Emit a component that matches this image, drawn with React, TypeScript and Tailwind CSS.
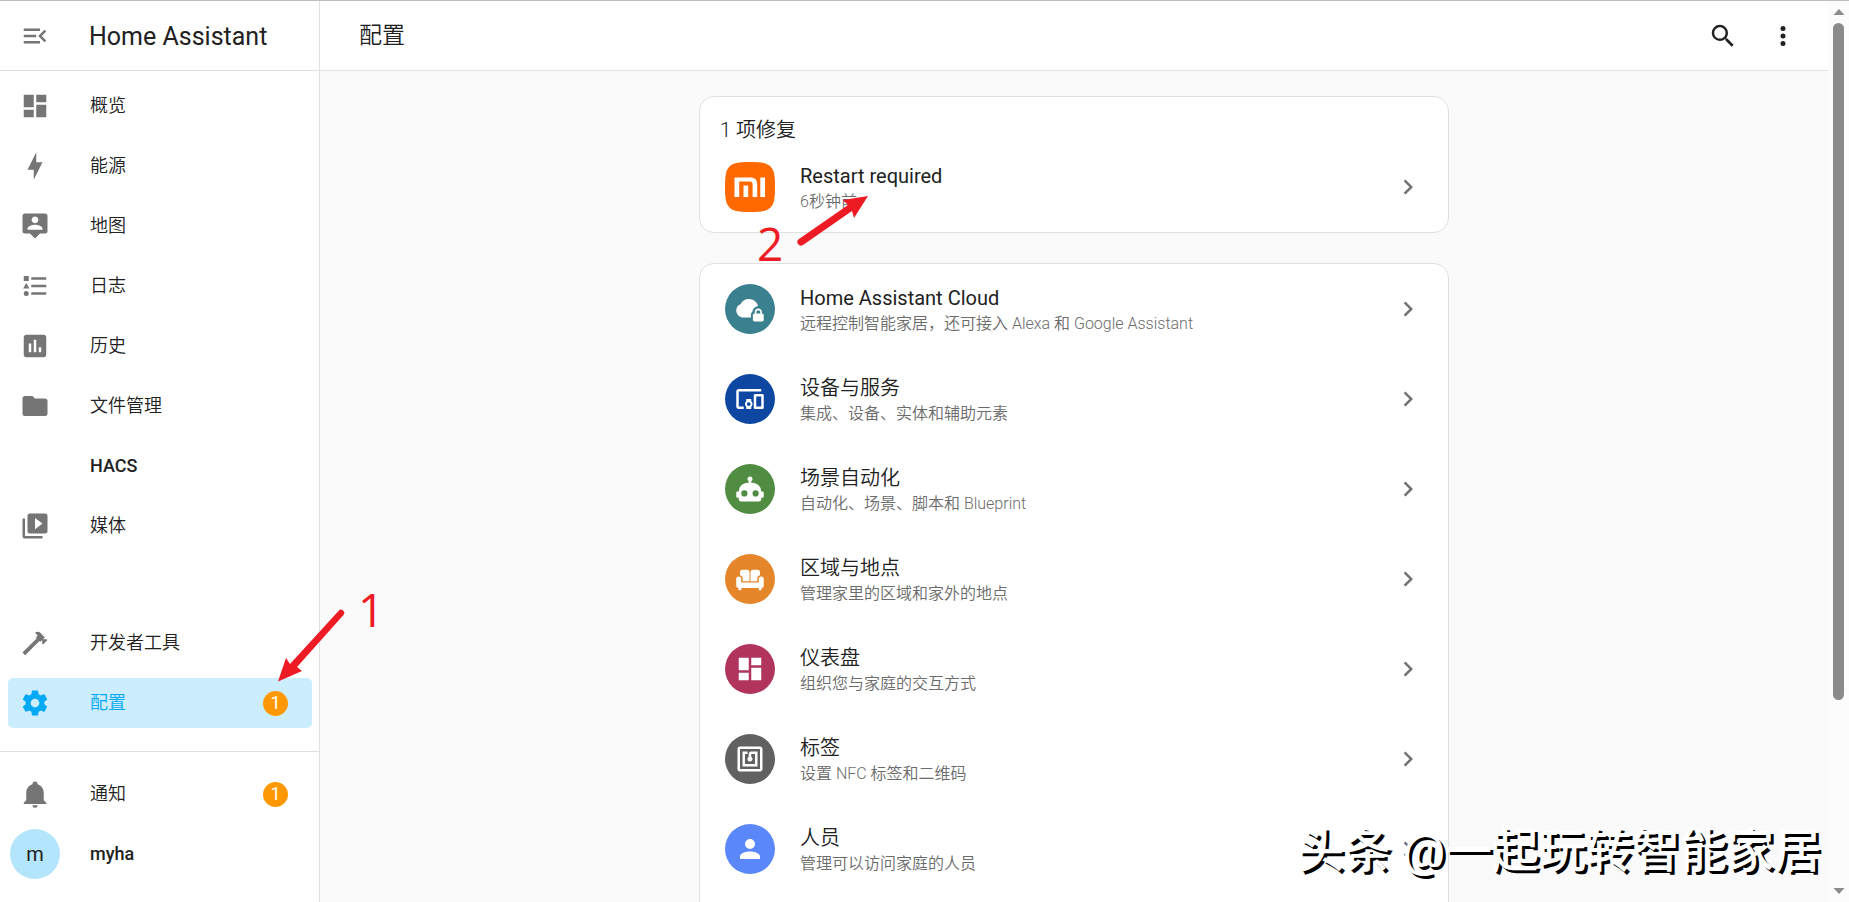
import type { ReactNode } from 'react'

const ICONS = {
  menuOpen: 'M21,15.61L19.59,17L14.58,12L19.59,7L21,8.39L17.44,12L21,15.61M3,6H16V8H3V6M3,13V11H13V13H3M3,18V16H16V18H3Z',
  dashboard: 'M13,3V9H21V3M13,21H21V11H13M3,21H11V15H3M3,13H11V3H3V13Z',
  bolt: 'M11 15H6L13 1V9H18L11 23V15Z',
  map: 'M20,2H4A2,2 0 0,0 2,4V16A2,2 0 0,0 4,18H8L12,22L16,18H20A2,2 0 0,0 22,16V4A2,2 0 0,0 20,2M12,4.3C13.5,4.3 14.7,5.5 14.7,7C14.7,8.5 13.5,9.7 12,9.7C10.5,9.7 9.3,8.5 9.3,7C9.3,5.5 10.5,4.3 12,4.3M18,15H6V14.1C6,12.1 10,11 12,11C14,11 18,12.1 18,14.1V15Z',
  logbook: 'M5,9.5L7.5,14H2.5L5,9.5M3,4H7V8H3V4M5,20A2,2 0 0,0 7,18A2,2 0 0,0 5,16A2,2 0 0,0 3,18A2,2 0 0,0 5,20M9,5V7H21V5H9M9,19H21V17H9V19M9,13H21V11H9V13Z',
  history: 'M9 17H7V10H9V17M13 17H11V7H13V17M17 17H15V13H17V17M19 3H5C3.9 3 3 3.9 3 5V19C3 20.1 3.9 21 5 21H19C20.1 21 21 20.1 21 19V5C21 3.9 20.1 3 19 3Z',
  folder: 'M10,4H4C2.89,4 2,4.89 2,6V18A2,2 0 0,0 4,20H20A2,2 0 0,0 22,18V8C22,6.89 21.1,6 20,6H12L10,4Z',
  media: 'M4,6H2V20A2,2 0 0,0 4,22H18V20H4V6M20,2H8A2,2 0 0,0 6,4V16A2,2 0 0,0 8,18H20A2,2 0 0,0 22,16V4A2,2 0 0,0 20,2M12,14.5V5.5L18,10L12,14.5Z',
  hammer: 'M2,19.63L13.43,8.2L12.72,7.5L14.14,6.07L12,3.89C13.2,2.7 15.09,2.7 16.27,3.89L19.87,7.5L18.45,8.91H21.29L22,9.62L18.45,13.17L17.74,12.46V9.62L16.27,11.04L15.56,10.33L4.13,21.76L2,19.63Z',
  cog: 'M12,15.5A3.5,3.5 0 0,1 8.5,12A3.5,3.5 0 0,1 12,8.5A3.5,3.5 0 0,1 15.5,12A3.5,3.5 0 0,1 12,15.5M19.43,12.97C19.47,12.65 19.5,12.33 19.5,12C19.5,11.67 19.47,11.34 19.43,11L21.54,9.37C21.73,9.22 21.78,8.95 21.66,8.73L19.66,5.27C19.54,5.05 19.27,4.96 19.05,5.05L16.56,6.05C16.04,5.66 15.5,5.32 14.87,5.07L14.5,2.42C14.46,2.18 14.25,2 14,2H10C9.75,2 9.54,2.18 9.5,2.42L9.13,5.07C8.5,5.32 7.96,5.66 7.44,6.05L4.95,5.05C4.73,4.96 4.46,5.05 4.34,5.27L2.34,8.73C2.21,8.95 2.27,9.22 2.46,9.37L4.57,11C4.53,11.34 4.5,11.67 4.5,12C4.5,12.33 4.53,12.65 4.57,12.97L2.46,14.63C2.27,14.78 2.21,15.05 2.34,15.27L4.34,18.73C4.46,18.95 4.73,19.03 4.95,18.95L7.44,17.94C7.96,18.34 8.5,18.68 9.13,18.93L9.5,21.58C9.54,21.82 9.75,22 10,22H14C14.25,22 14.46,21.82 14.5,21.58L14.87,18.93C15.5,18.67 16.04,18.34 16.56,17.94L19.05,18.95C19.27,19.03 19.54,18.95 19.66,18.73L21.66,15.27C21.78,15.05 21.73,14.78 21.54,14.63L19.43,12.97Z',
  bell: 'M21,19V20H3V19L5,17V11C5,7.9 7.03,5.17 10,4.29C10,4.19 10,4.1 10,4A2,2 0 0,1 12,2A2,2 0 0,1 14,4C14,4.1 14,4.19 14,4.29C16.97,5.17 19,7.9 19,11V17L21,19M14,21A2,2 0 0,1 12,23A2,2 0 0,1 10,21',
  magnify: 'M9.5,3A6.5,6.5 0 0,1 16,9.5C16,11.11 15.41,12.59 14.44,13.73L14.71,14H15.5L20.5,19L19,20.5L14,15.5V14.71L13.73,14.44C12.59,15.41 11.11,16 9.5,16A6.5,6.5 0 0,1 3,9.5A6.5,6.5 0 0,1 9.5,3M9.5,5C7,5 5,7 5,9.5C5,12 7,14 9.5,14C12,14 14,12 14,9.5C14,7 12,5 9.5,5Z',
  dots: 'M12,16A2,2 0 0,1 14,18A2,2 0 0,1 12,20A2,2 0 0,1 10,18A2,2 0 0,1 12,16M12,10A2,2 0 0,1 14,12A2,2 0 0,1 12,14A2,2 0 0,1 10,12A2,2 0 0,1 12,10M12,4A2,2 0 0,1 14,6A2,2 0 0,1 12,8A2,2 0 0,1 10,6A2,2 0 0,1 12,4Z',
  chevron: 'M8.59,16.58L13.17,12L8.59,7.41L10,6L16,12L10,18L8.59,16.58Z',
  cloudLock: 'M11,4C8,4 5.6,5.6 4.5,8.1C2.4,8.7 1,10.7 1,13C1,16.2 3.3,18.7 6.3,18.7H12.7V16.7C12.7,15.7 13.1,14.9 13.8,14.3C14.1,11.7 16,9.8 18.4,9.5C17.6,6.2 14.6,4 11,4ZM18.6,11.5C17,11.5 15.8,12.7 15.8,14.3V15.6C15,15.6 14.3,16.2 14.3,17V20.6C14.3,21.4 15,22 15.7,22H21.6C22.4,22 23,21.4 23,20.6V17C23,16.2 22.3,15.6 21.5,15.6V14.3C21.5,12.7 20.2,11.5 18.6,11.5M18.6,12.9C19.5,12.9 20.2,13.5 20.2,14.3V15.6H17.1V14.3C17.1,13.5 17.8,12.9 18.6,12.9Z',
  devices: 'M3 6H21V4H3C1.9 4 1 4.9 1 6V18C1 19.1 1.9 20 3 20H7V18H3V6M13 12H9V13.78C8.39 14.33 8 15.11 8 16C8 16.89 8.39 17.67 9 18.22V20H13V18.22C13.61 17.67 14 16.88 14 16S13.61 14.33 13 13.78V12M11 17.5C10.17 17.5 9.5 16.83 9.5 16S10.17 14.5 11 14.5 12.5 15.17 12.5 16 11.83 17.5 11 17.5M22 8H16C15.5 8 15 8.5 15 9V19C15 19.5 15.5 20 16 20H22C22.5 20 23 19.5 23 19V9C23 8.5 22.5 8 22 8M21 18H17V10H21V18Z',
  robot: 'M12,2A2,2 0 0,1 14,4C14,4.74 13.6,5.39 13,5.73V7H14A7,7 0 0,1 21,14H22A1,1 0 0,1 23,15V18A1,1 0 0,1 22,19H21V20A2,2 0 0,1 19,22H5A2,2 0 0,1 3,20V19H2A1,1 0 0,1 1,18V15A1,1 0 0,1 2,14H3A7,7 0 0,1 10,7H11V5.73C10.4,5.39 10,4.74 10,4A2,2 0 0,1 12,2M7.5,13A2.5,2.5 0 0,0 5,15.5A2.5,2.5 0 0,0 7.5,18A2.5,2.5 0 0,0 10,15.5A2.5,2.5 0 0,0 7.5,13M16.5,13A2.5,2.5 0 0,0 14,15.5A2.5,2.5 0 0,0 16.5,18A2.5,2.5 0 0,0 19,15.5A2.5,2.5 0 0,0 16.5,13Z',
  sofa: 'M6,4.5H9.6A2,2 0 0,1 11.6,6.5V13.8H6.2V12A3,3 0 0,0 4,9V6.5A2,2 0 0,1 6,4.5M14.4,4.5H18A2,2 0 0,1 20,6.5V9A3,3 0 0,0 17.8,12V13.8H12.4V6.5A2,2 0 0,1 14.4,4.5M3,10A2,2 0 0,1 5,12V14.8H19V12A2,2 0 0,1 23,12V17.5A2,2 0 0,1 21.2,19.2V21H19V19.2H5V21H2.8V19.2A2,2 0 0,1 1,17.5V12A2,2 0 0,1 3,10Z',
  nfc: 'M18,6H13A2,2 0 0,0 11,8V10.28C10.41,10.62 10,11.26 10,12A2,2 0 0,0 12,14C13.11,14 14,13.1 14,12C14,11.26 13.6,10.62 13,10.28V8H16V16H8V8H10V6H6V18H18M20,20H4V4H20M20,2H4A2,2 0 0,0 2,4V20A2,2 0 0,0 4,22H20C21.11,22 22,21.1 22,20V4C22,2.89 21.11,2 20,2Z',
  account: 'M12,4A4,4 0 0,1 16,8A4,4 0 0,1 12,12A4,4 0 0,1 8,8A4,4 0 0,1 12,4M12,14C16.42,14 20,15.79 20,18V20H4V18C4,15.79 7.58,14 12,14Z',
}

type IconName = keyof typeof ICONS

const PANELS: { label: string; icon?: IconName }[] = [
  { label: '概览', icon: 'dashboard' },
  { label: '能源', icon: 'bolt' },
  { label: '地图', icon: 'map' },
  { label: '日志', icon: 'logbook' },
  { label: '历史', icon: 'history' },
  { label: '文件管理', icon: 'folder' },
  { label: 'HACS' },
  { label: '媒体', icon: 'media' },
]

const SETTINGS: { title: string; description: string; icon: IconName; color: string }[] = [
  { title: 'Home Assistant Cloud', description: '远程控制智能家居，还可接入 Alexa 和 Google Assistant', icon: 'cloudLock', color: 'bg-[#3b808e]' },
  { title: '设备与服务', description: '集成、设备、实体和辅助元素', icon: 'devices', color: 'bg-[#0d47a1]' },
  { title: '场景自动化', description: '自动化、场景、脚本和 Blueprint', icon: 'robot', color: 'bg-[#518c43]' },
  { title: '区域与地点', description: '管理家里的区域和家外的地点', icon: 'sofa', color: 'bg-[#e48629]' },
  { title: '仪表盘', description: '组织您与家庭的交互方式', icon: 'dashboard', color: 'bg-[#b1345c]' },
  { title: '标签', description: '设置 NFC 标签和二维码', icon: 'nfc', color: 'bg-[#616161]' },
  { title: '人员', description: '管理可以访问家庭的人员', icon: 'account', color: 'bg-[#5a87fa]' },
]

// Latin-only labels need a heavier cut than the Chinese ones
const isLatin = (text: string) => /^[\x20-\x7e]+$/.test(text)

function Icon({ name }: { name: IconName }) {
  return (
    <svg viewBox="0 0 24 24" className="w-[30px] h-[30px] shrink-0" fill="currentColor" fillRule="evenodd" aria-hidden="true">
      <path d={ICONS[name]} />
    </svg>
  )
}

function Badge({ count }: { count: number }) {
  return (
    <span className="flex items-center justify-center w-[25px] h-[25px] rounded-full bg-[#ff9800] text-white text-lg">
      {count}
    </span>
  )
}

function NavItem({ label, icon, badge, active }: { label: string; icon?: IconName; badge?: number; active?: boolean }) {
  return (
    <a
      href="#"
      aria-current={active ? 'page' : undefined}
      className={`flex items-center h-[50px] pl-3 pr-6 rounded-[5px] ${active ? 'bg-[#ccedfd] text-[#03a9f4]' : 'text-[#212121]'}`}
    >
      <span className={`w-[30px] mr-10 ${active ? '' : 'text-[#757575]'}`}>{icon && <Icon name={icon} />}</span>
      <span className={`flex-1 text-lg ${isLatin(label) ? 'font-medium' : 'font-[350]'}`}>{label}</span>
      {badge && <Badge count={badge} />}
    </a>
  )
}

function MiLogo() {
  return (
    <svg viewBox="0 0 50 50" className="w-[50px] h-[50px] shrink-0" role="img" aria-label="Xiaomi">
      <path fill="#ff6900" d="M25 0C37 0 42 1 45.5 4.5S50 13 50 25s-1 17-4.5 20.5S37 50 25 50 8 49 4.5 45.5 0 37 0 25 1 8 4.5 4.5 13 0 25 0Z" />
      <path fill="#fff" d="M9.5 15.5h16c4.2 0 6.7 2.2 6.7 6.4V35h-4.6V22.5c0-2-.9-3-2.8-3H14.2V35H9.5ZM18.5 23.5h4.7V35h-4.7ZM35.3 15.5H40V35h-4.7Z" />
    </svg>
  )
}

function Row({ title, description, children }: { title: string; description: string; children: ReactNode }) {
  return (
    <a href="#" className="flex items-center h-[90px] px-[25px]">
      {children}
      <span className="flex-1 ml-[25px] pt-1">
        <span className={`block text-xl leading-[26px] text-[#212121] ${isLatin(title) ? 'font-normal' : 'font-[350]'}`}>{title}</span>
        <span className="block text-base leading-[26px] font-[350] text-[#6b6b6b]">{description}</span>
      </span>
      <span className="text-[#727272]"><Icon name="chevron" /></span>
    </a>
  )
}

export default function App() {
  return (
    <div className="flex h-screen overflow-hidden border-t border-[#bdbdbd] bg-[#fafafa] font-['Roboto','Noto_Sans_CJK_SC',sans-serif] text-[#212121]">
      {/* Sidebar */}
      <aside className="flex flex-col w-80 shrink-0 bg-white border-r border-[#e0e0e0]">
        <div className="flex items-center h-[70px] shrink-0 pl-5 border-b border-[#e0e0e0]">
          <button type="button" aria-label="Toggle sidebar" className="mr-[39px] text-[#757575]"><Icon name="menuOpen" /></button>
          <span className="pt-0.5 text-[25px]">Home Assistant</span>
        </div>
        <nav className="flex flex-col flex-1 gap-2.5 pl-2 pt-2.5 pr-[7px]">
          {PANELS.map(p => <NavItem key={p.label} {...p} />)}
          <div className="flex-1" />
          <NavItem label="开发者工具" icon="hammer" />
          <NavItem label="配置" icon="cog" badge={1} active />
        </nav>
        <div className="mt-[23px] pt-[17px] pb-[23px] pl-2 pr-[7px] border-t border-[#e0e0e0]">
          <NavItem label="通知" icon="bell" badge={1} />
          <a href="#" className="flex items-center h-[50px] mt-2.5 pl-0.5">
            <span className="flex items-center justify-center w-[50px] h-[50px] mr-[30px] rounded-full bg-[#b3e5fc] text-xl">m</span>
            <span className="text-lg font-medium">myha</span>
          </a>
        </div>
      </aside>

      {/* Main panel */}
      <div className="flex flex-col flex-1 min-w-0">
        <header className="flex items-center h-[70px] shrink-0 pl-[39px] pr-[30px] bg-white border-b border-[#e0e0e0]">
          <h1 className="flex-1 pt-0.5 text-[23px] font-[350]">配置</h1>
          <button type="button" aria-label="搜索" className="mr-[30px]"><Icon name="magnify" /></button>
          <button type="button" aria-label="更多"><Icon name="dots" /></button>
        </header>
        <main className="flex-1 min-h-0 overflow-hidden pt-[25px]">
          <section className="max-w-[750px] mx-auto bg-white border border-[#e0e0e0] rounded-[15px]">
            <h2 className="pt-[21px] pl-5 text-xl leading-6 font-[350]">1 项修复</h2>
            <Row title="Restart required" description="6秒钟前"><MiLogo /></Row>
          </section>
          <section className="max-w-[750px] mx-auto mt-[30px] pb-10 bg-white border border-[#e0e0e0] rounded-[15px]">
            {SETTINGS.map(s => (
              <Row key={s.title} title={s.title} description={s.description}>
                <span className={`flex items-center justify-center w-[50px] h-[50px] rounded-full text-white ${s.color}`}>
                  <Icon name={s.icon} />
                </span>
              </Row>
            ))}
          </section>
        </main>
      </div>

      {/* Scrollbar */}
      <div className="flex flex-col items-center w-[21px] shrink-0 py-2 bg-[#fcfcfc]" aria-hidden="true">
        <svg viewBox="0 0 12 6" className="w-3 h-1.5"><path d="M6 0l5.5 6H.5Z" fill="#8b8b8b" /></svg>
        <div className="w-[11px] h-[calc(75%+13px)] mt-2 rounded-full bg-[#8b8b8b]" />
        <svg viewBox="0 0 12 6" className="w-3 h-1.5 mt-auto"><path d="M6 6l5.5-6H.5Z" fill="#8b8b8b" /></svg>
      </div>

      {/* Step markers */}
      <div className="absolute left-[270px] top-[580px] text-[#ed1c24] font-['Open_Sans',sans-serif]">
        <svg viewBox="0 0 80 110" className="w-20 h-[110px]" fill="currentColor">
          <path d="M8 101.5L16 78l4 6L68.5 31a3 3 0 0 1 5 4L27 87l5 4Z" />
        </svg>
        <span className="absolute left-[88px] top-1 text-[46px] leading-[50px]">1</span>
      </div>
      <div className="absolute left-[757px] top-[190px] text-[#ed1c24] font-['Open_Sans',sans-serif]">
        <span className="absolute left-0 top-7 text-[46px] leading-[50px]">2</span>
        <svg viewBox="0 0 120 60" className="w-[120px] h-[60px]" fill="currentColor">
          <path d="M111 6L97 28l-2-7L46 55a3 3 0 0 1-4-6L91 15l-5-5Z" />
        </svg>
      </div>

      <div className="absolute right-7 bottom-[19px] text-[47px] leading-[64px] font-medium text-white whitespace-nowrap [text-shadow:3px_3px_0_#000]">
        头条 @一起玩转智能家居
      </div>
    </div>
  )
}
